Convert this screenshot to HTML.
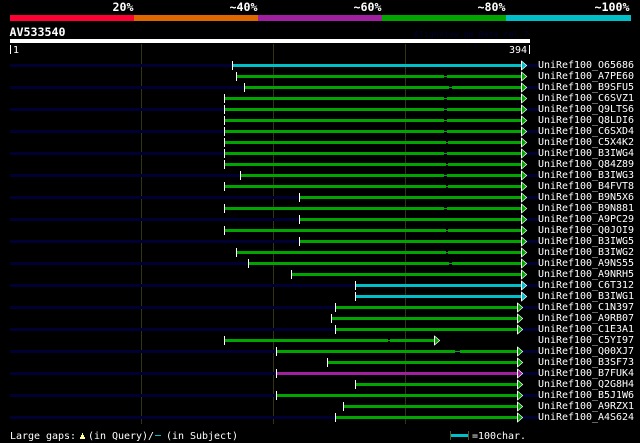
<!DOCTYPE html>
<html>
<head>
<meta charset="utf-8">
<style>
html,body{margin:0;padding:0;background:#000;width:640px;height:443px;overflow:hidden}
svg{display:block}
text{font-family:"DejaVu Sans Mono","Liberation Mono",monospace;font-size:10px;letter-spacing:-.02px;fill:#fff}
.b{font-weight:bold;font-size:11.63px;letter-spacing:0}
rect{shape-rendering:crispEdges}
.s{fill:#000033}
.w{fill:#fff}
.v{fill:#333316}
polygon{stroke:#fff;stroke-width:.7}
.G{fill:#00a500}
.C{fill:#00bfc8}
.P{fill:#a0209f}
</style>
</head>
<body>
<svg width="640" height="443" viewBox="0 0 640 443" xmlns="http://www.w3.org/2000/svg">
<rect x="10" y="15" width="124" height="6" fill="#ff0033"/>
<rect x="134" y="15" width="124" height="6" fill="#e06600"/>
<rect x="258" y="15" width="124" height="6" fill="#a0209f"/>
<rect x="382" y="15" width="124" height="6" fill="#00a500"/>
<rect x="506" y="15" width="125" height="6" fill="#00bfc8"/>
<text class="b" x="112.500" y="11">20%</text>
<text class="b" x="229.500" y="11">~40%</text>
<text class="b" x="353.500" y="11">~60%</text>
<text class="b" x="477.500" y="11">~80%</text>
<text class="b" x="594.500" y="11">~100%</text>
<text class="b" x="9.500" y="36">AV533540</text>
<text x="414" y="37" style="font-size:8.3px;fill:#000033">AlignView.pm Beta rel.7</text>
<rect x="10" y="39" width="520" height="4" class="w"/>
<rect x="10" y="45" width="1" height="9" class="w"/>
<text x="13" y="53">1</text>
<rect x="529" y="45" width="1" height="9" class="w"/>
<text x="509" y="53">394</text>

<rect x="141" y="44" width="1" height="380" class="v"/>
<rect x="273" y="44" width="1" height="380" class="v"/>
<rect x="405" y="44" width="1" height="380" class="v"/>

<rect class="s" x="10" y="64" width="528" height="3"/>
<rect class="s" x="10" y="86" width="528" height="3"/>
<rect class="s" x="10" y="108" width="528" height="3"/>
<rect class="s" x="10" y="130" width="528" height="3"/>
<rect class="s" x="10" y="152" width="528" height="3"/>
<rect class="s" x="10" y="174" width="528" height="3"/>
<rect class="s" x="10" y="196" width="528" height="3"/>
<rect class="s" x="10" y="218" width="528" height="3"/>
<rect class="s" x="10" y="240" width="528" height="3"/>
<rect class="s" x="10" y="262" width="528" height="3"/>
<rect class="s" x="10" y="284" width="528" height="3"/>
<rect class="s" x="10" y="306" width="528" height="3"/>
<rect class="s" x="10" y="328" width="528" height="3"/>
<rect class="s" x="10" y="350" width="528" height="3"/>
<rect class="s" x="10" y="372" width="528" height="3"/>
<rect class="s" x="10" y="394" width="528" height="3"/>
<rect class="s" x="10" y="416" width="528" height="3"/>

<g class="C"><rect x="233" y="64" width="288" height="3"/><rect class="w" x="232" y="61" width="1" height="9"/><polygon points="521.5,61 526.7,65.5 521.5,70"/><rect class="w" x="521" y="61" width="1" height="9"/><text x="538" y="68">UniRef100_O65686</text></g>
<g class="G"><rect x="237" y="75" width="207" height="3"/><rect x="444" y="76" width="3" height="1"/><rect x="447" y="75" width="74" height="3"/><rect class="w" x="236" y="72" width="1" height="9"/><polygon points="521.5,72 526.7,76.5 521.5,81"/><rect class="w" x="521" y="72" width="1" height="9"/><text x="538" y="79">UniRef100_A7PE60</text></g>
<g class="G"><rect x="245" y="86" width="204" height="3"/><rect x="449" y="87" width="3" height="1"/><rect x="452" y="86" width="69" height="3"/><rect class="w" x="244" y="83" width="1" height="9"/><polygon points="521.5,83 526.7,87.5 521.5,92"/><rect class="w" x="521" y="83" width="1" height="9"/><text x="538" y="90">UniRef100_B9SFU5</text></g>
<g class="G"><rect x="225" y="97" width="219" height="3"/><rect x="444" y="98" width="3" height="1"/><rect x="447" y="97" width="74" height="3"/><rect class="w" x="224" y="94" width="1" height="9"/><polygon points="521.5,94 526.7,98.5 521.5,103"/><rect class="w" x="521" y="94" width="1" height="9"/><text x="538" y="101">UniRef100_C6SVZ1</text></g>
<g class="G"><rect x="225" y="108" width="219" height="3"/><rect x="444" y="109" width="3" height="1"/><rect x="447" y="108" width="74" height="3"/><rect class="w" x="224" y="105" width="1" height="9"/><polygon points="521.5,105 526.7,109.5 521.5,114"/><rect class="w" x="521" y="105" width="1" height="9"/><text x="538" y="112">UniRef100_Q9LTS6</text></g>
<g class="G"><rect x="225" y="119" width="219" height="3"/><rect x="444" y="120" width="3" height="1"/><rect x="447" y="119" width="74" height="3"/><rect class="w" x="224" y="116" width="1" height="9"/><polygon points="521.5,116 526.7,120.5 521.5,125"/><rect class="w" x="521" y="116" width="1" height="9"/><text x="538" y="123">UniRef100_Q8LDI6</text></g>
<g class="G"><rect x="225" y="130" width="219" height="3"/><rect x="444" y="131" width="3" height="1"/><rect x="447" y="130" width="74" height="3"/><rect class="w" x="224" y="127" width="1" height="9"/><polygon points="521.5,127 526.7,131.5 521.5,136"/><rect class="w" x="521" y="127" width="1" height="9"/><text x="538" y="134">UniRef100_C6SXD4</text></g>
<g class="G"><rect x="225" y="141" width="221" height="3"/><rect x="446" y="142" width="2" height="1"/><rect x="448" y="141" width="73" height="3"/><rect class="w" x="224" y="138" width="1" height="9"/><polygon points="521.5,138 526.7,142.5 521.5,147"/><rect class="w" x="521" y="138" width="1" height="9"/><text x="538" y="145">UniRef100_C5X4K2</text></g>
<g class="G"><rect x="225" y="152" width="219" height="3"/><rect x="444" y="153" width="3" height="1"/><rect x="447" y="152" width="74" height="3"/><rect class="w" x="224" y="149" width="1" height="9"/><polygon points="521.5,149 526.7,153.5 521.5,158"/><rect class="w" x="521" y="149" width="1" height="9"/><text x="538" y="156">UniRef100_B3IWG4</text></g>
<g class="G"><rect x="225" y="163" width="221" height="3"/><rect x="446" y="164" width="2" height="1"/><rect x="448" y="163" width="73" height="3"/><rect class="w" x="224" y="160" width="1" height="9"/><polygon points="521.5,160 526.7,164.5 521.5,169"/><rect class="w" x="521" y="160" width="1" height="9"/><text x="538" y="167">UniRef100_Q84Z89</text></g>
<g class="G"><rect x="241" y="174" width="203" height="3"/><rect x="444" y="175" width="3" height="1"/><rect x="447" y="174" width="74" height="3"/><rect class="w" x="240" y="171" width="1" height="9"/><polygon points="521.5,171 526.7,175.5 521.5,180"/><rect class="w" x="521" y="171" width="1" height="9"/><text x="538" y="178">UniRef100_B3IWG3</text></g>
<g class="G"><rect x="225" y="185" width="221" height="3"/><rect x="446" y="186" width="2" height="1"/><rect x="448" y="185" width="73" height="3"/><rect class="w" x="224" y="182" width="1" height="9"/><polygon points="521.5,182 526.7,186.5 521.5,191"/><rect class="w" x="521" y="182" width="1" height="9"/><text x="538" y="189">UniRef100_B4FVT8</text></g>
<g class="G"><rect x="300" y="196" width="221" height="3"/><rect class="w" x="299" y="193" width="1" height="9"/><polygon points="521.5,193 526.7,197.5 521.5,202"/><rect class="w" x="521" y="193" width="1" height="9"/><text x="538" y="200">UniRef100_B9N5X6</text></g>
<g class="G"><rect x="225" y="207" width="219" height="3"/><rect x="444" y="208" width="3" height="1"/><rect x="447" y="207" width="74" height="3"/><rect class="w" x="224" y="204" width="1" height="9"/><polygon points="521.5,204 526.7,208.5 521.5,213"/><rect class="w" x="521" y="204" width="1" height="9"/><text x="538" y="211">UniRef100_B9N881</text></g>
<g class="G"><rect x="300" y="218" width="221" height="3"/><rect class="w" x="299" y="215" width="1" height="9"/><polygon points="521.5,215 526.7,219.5 521.5,224"/><rect class="w" x="521" y="215" width="1" height="9"/><text x="538" y="222">UniRef100_A9PC29</text></g>
<g class="G"><rect x="225" y="229" width="221" height="3"/><rect x="446" y="230" width="2" height="1"/><rect x="448" y="229" width="73" height="3"/><rect class="w" x="224" y="226" width="1" height="9"/><polygon points="521.5,226 526.7,230.5 521.5,235"/><rect class="w" x="521" y="226" width="1" height="9"/><text x="538" y="233">UniRef100_Q0JOI9</text></g>
<g class="G"><rect x="300" y="240" width="221" height="3"/><rect class="w" x="299" y="237" width="1" height="9"/><polygon points="521.5,237 526.7,241.5 521.5,246"/><rect class="w" x="521" y="237" width="1" height="9"/><text x="538" y="244">UniRef100_B3IWG5</text></g>
<g class="G"><rect x="237" y="251" width="209" height="3"/><rect x="446" y="252" width="2" height="1"/><rect x="448" y="251" width="73" height="3"/><rect class="w" x="236" y="248" width="1" height="9"/><polygon points="521.5,248 526.7,252.5 521.5,257"/><rect class="w" x="521" y="248" width="1" height="9"/><text x="538" y="255">UniRef100_B3IWG2</text></g>
<g class="G"><rect x="249" y="262" width="200" height="3"/><rect x="449" y="263" width="3" height="1"/><rect x="452" y="262" width="69" height="3"/><rect class="w" x="248" y="259" width="1" height="9"/><polygon points="521.5,259 526.7,263.5 521.5,268"/><rect class="w" x="521" y="259" width="1" height="9"/><text x="538" y="266">UniRef100_A9NS55</text></g>
<g class="G"><rect x="292" y="273" width="229" height="3"/><rect class="w" x="291" y="270" width="1" height="9"/><polygon points="521.5,270 526.7,274.5 521.5,279"/><rect class="w" x="521" y="270" width="1" height="9"/><text x="538" y="277">UniRef100_A9NRH5</text></g>
<g class="C"><rect x="356" y="284" width="165" height="3"/><rect class="w" x="355" y="281" width="1" height="9"/><polygon points="521.5,281 526.7,285.5 521.5,290"/><rect class="w" x="521" y="281" width="1" height="9"/><text x="538" y="288">UniRef100_C6T312</text></g>
<g class="C"><rect x="356" y="295" width="165" height="3"/><rect class="w" x="355" y="292" width="1" height="9"/><polygon points="521.5,292 526.7,296.5 521.5,301"/><rect class="w" x="521" y="292" width="1" height="9"/><text x="538" y="299">UniRef100_B3IWG1</text></g>
<g class="G"><rect x="336" y="306" width="181" height="3"/><rect class="w" x="335" y="303" width="1" height="9"/><polygon points="517.5,303 522.7,307.5 517.5,312"/><rect class="w" x="517" y="303" width="1" height="9"/><text x="538" y="310">UniRef100_C1N397</text></g>
<g class="G"><rect x="332" y="317" width="185" height="3"/><rect class="w" x="331" y="314" width="1" height="9"/><polygon points="517.5,314 522.7,318.5 517.5,323"/><rect class="w" x="517" y="314" width="1" height="9"/><text x="538" y="321">UniRef100_A9RB07</text></g>
<g class="G"><rect x="336" y="328" width="181" height="3"/><rect class="w" x="335" y="325" width="1" height="9"/><polygon points="517.5,325 522.7,329.5 517.5,334"/><rect class="w" x="517" y="325" width="1" height="9"/><text x="538" y="332">UniRef100_C1E3A1</text></g>
<g class="G"><rect x="225" y="339" width="163" height="3"/><rect x="388" y="340" width="2" height="1"/><rect x="390" y="339" width="44" height="3"/><rect class="w" x="224" y="336" width="1" height="9"/><polygon points="434.5,336 439.7,340.5 434.5,345"/><rect class="w" x="434" y="336" width="1" height="9"/><text x="538" y="343">UniRef100_C5YI97</text></g>
<g class="G"><rect x="277" y="350" width="178" height="3"/><rect x="455" y="351" width="5" height="1"/><rect x="460" y="350" width="57" height="3"/><rect class="w" x="276" y="347" width="1" height="9"/><polygon points="517.5,347 522.7,351.5 517.5,356"/><rect class="w" x="517" y="347" width="1" height="9"/><text x="538" y="354">UniRef100_Q00XJ7</text></g>
<g class="G"><rect x="328" y="361" width="189" height="3"/><rect class="w" x="327" y="358" width="1" height="9"/><polygon points="517.5,358 522.7,362.5 517.5,367"/><rect class="w" x="517" y="358" width="1" height="9"/><text x="538" y="365">UniRef100_B3SF73</text></g>
<g class="P"><rect x="277" y="372" width="240" height="3"/><rect class="w" x="276" y="369" width="1" height="9"/><polygon points="517.5,369 522.7,373.5 517.5,378"/><rect class="w" x="517" y="369" width="1" height="9"/><text x="538" y="376">UniRef100_B7FUK4</text></g>
<g class="G"><rect x="356" y="383" width="161" height="3"/><rect class="w" x="355" y="380" width="1" height="9"/><polygon points="517.5,380 522.7,384.5 517.5,389"/><rect class="w" x="517" y="380" width="1" height="9"/><text x="538" y="387">UniRef100_Q2G8H4</text></g>
<g class="G"><rect x="277" y="394" width="240" height="3"/><rect class="w" x="276" y="391" width="1" height="9"/><polygon points="517.5,391 522.7,395.5 517.5,400"/><rect class="w" x="517" y="391" width="1" height="9"/><text x="538" y="398">UniRef100_B5J1W6</text></g>
<g class="G"><rect x="344" y="405" width="173" height="3"/><rect class="w" x="343" y="402" width="1" height="9"/><polygon points="517.5,402 522.7,406.5 517.5,411"/><rect class="w" x="517" y="402" width="1" height="9"/><text x="538" y="409">UniRef100_A9RZX1</text></g>
<g class="G"><rect x="336" y="416" width="181" height="3"/><rect class="w" x="335" y="413" width="1" height="9"/><polygon points="517.5,413 522.7,417.5 517.5,422"/><rect class="w" x="517" y="413" width="1" height="9"/><text x="538" y="420">UniRef100_A4S624</text></g>

<text x="10" y="439">Large gaps:</text>
<rect x="82" y="433" width="1" height="2" fill="#ffff99"/>
<rect x="81" y="435" width="3" height="2" fill="#ffff99"/>
<rect x="80" y="437" width="5" height="2" fill="#ffff99"/>
<text x="88" y="439">(in Query)/</text>
<rect x="155" y="435" width="6" height="1" fill="#00bfc8"/>
<text x="166" y="439">(in Subject)</text>
<rect x="450" y="431" width="1" height="9" fill="#555522"/>
<rect x="451" y="434" width="17" height="3" fill="#00bfc8"/>
<rect x="468" y="431" width="1" height="9" fill="#555522"/>
<text x="472" y="439">=100char.</text>
</svg>
</body>
</html>
